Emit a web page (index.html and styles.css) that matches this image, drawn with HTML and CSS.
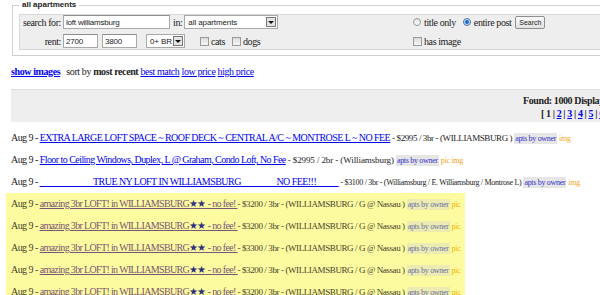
FILE: index.html
```html
<!DOCTYPE html>
<html lang="en">
<head>
    <meta charset="UTF-8">
    <title>all apartments</title>
    <link rel="stylesheet" href="styles.css">
</head>
<body>
<div class="page">
    <fieldset class="search">
        <legend>all apartments</legend>
        <div class="panel">
            <div class="frow">
                <label class="lbl">search for:</label>
                <div class="mid">
                    <input type="text" class="query" value="loft williamsburg">
                    <span class="in">in:</span>
                    <div class="select wide"><span class="val">all apartments</span><span class="arrow"></span></div>
                </div>
                <div class="side">
                    <input type="radio" name="where" class="radio">
                    <span class="opt">title only</span>
                    <input type="radio" name="where" class="radio" checked>
                    <span class="opt tight">entire post</span>
                    <button type="button">Search</button>
                </div>
            </div>
            <div class="frow">
                <label class="lbl">rent:</label>
                <div class="mid">
                    <input type="text" class="price" value="2700">
                    <input type="text" class="price gap" value="3800">
                    <div class="select br"><span class="val">0+ BR</span><span class="arrow"></span></div>
                    <input type="checkbox" class="check">
                    <span class="opt">cats</span>
                    <input type="checkbox" class="check">
                    <span class="opt">dogs</span>
                </div>
                <div class="side">
                    <input type="checkbox" class="check">
                    <span class="opt">has image</span>
                </div>
            </div>
        </div>
    </fieldset>

    <div class="sortbar">
        <a href="#" class="show">show images</a>
        <span class="sort">sort by <b>most recent</b> <a href="#">best match</a> <a href="#">low price</a> <a href="#">high price</a></span>
    </div>

    <div class="band">
        <div class="pager">
            <div class="found"><b>Found: 1000 Displaying: 1 - 100</b></div>
            <div class="pages">[ <b>1</b> | <a href="#">2</a> | <a href="#">3</a> | <a href="#">4</a> | <a href="#">5</a> | <a href="#">6</a> | <a href="#">7</a> | <a href="#">8</a> | <a href="#">9</a> | <a href="#">10</a> ]</div>
        </div>
    </div>

    <div class="listings">
        <p class="row">Aug 9 - <a href="#">EXTRA LARGE LOFT SPACE ~ ROOF DECK ~ CENTRAL A/C ~ MONTROSE L ~ NO FEE</a> <span class="meta">- $2995 / 3br - (WILLIAMSBURG )</span> <span class="cat">apts by owner</span> <span class="tag">img</span></p>
        <p class="row">Aug 9 - <a href="#">Floor to Ceiling Windows, Duplex, L @ Graham, Condo Loft, No Fee</a> <span class="meta open">- $2995 / 2br - (Williamsburg)</span> <span class="cat">apts by owner</span> <span class="tag">pic img</span></p>
        <p class="row">Aug 9 - <a href="#">____________TRUE NY LOFT IN WILLIAMSBURG________NO FEE!!!_____</a> <span class="meta small">- $3100 / 3br - (Williamsburg / E. Williamsburg / Montrose L)</span> <span class="cat">apts by owner</span> <span class="tag">img</span></p>
        <div class="hl">
            <p class="row">Aug 9 - <a href="#">amazing 3br LOFT! in WILLIAMSBURG<span class="star">★★</span> - no fee! </a> <span class="meta">- $3200 / 3br - (WILLIAMSBURG / G @ Nassau )</span> <span class="cat">apts by owner</span> <span class="tag">pic</span></p>
            <p class="row">Aug 9 - <a href="#">amazing 3br LOFT! in WILLIAMSBURG<span class="star">★★</span> - no fee! </a> <span class="meta">- $3200 / 3br - (WILLIAMSBURG / G @ Nassau )</span> <span class="cat">apts by owner</span> <span class="tag">pic</span></p>
            <p class="row">Aug 9 - <a href="#">amazing 3br LOFT! in WILLIAMSBURG<span class="star">★★</span> - no fee! </a> <span class="meta">- $3300 / 3br - (WILLIAMSBURG / G @ Nassau )</span> <span class="cat">apts by owner</span> <span class="tag">pic</span></p>
            <p class="row">Aug 9 - <a href="#">amazing 3br LOFT! in WILLIAMSBURG<span class="star">★★</span> - no fee! </a> <span class="meta">- $3200 / 3br - (WILLIAMSBURG / G @ Nassau )</span> <span class="cat">apts by owner</span> <span class="tag">pic</span></p>
            <p class="row">Aug 9 - <a href="#">amazing 3br LOFT! in WILLIAMSBURG<span class="star">★★</span> - no fee! </a> <span class="meta">- $3200 / 3br - (WILLIAMSBURG / G @ Nassau )</span> <span class="cat">apts by owner</span> <span class="tag">pic</span></p>
        </div>
    </div>
</div>
</body>
</html>
```

FILE: styles.css
```css
html {
    overflow: hidden;
}
body {
    margin: 0;
    font-family: "Liberation Serif", "Times New Roman", serif;
    font-size: 10px;
    letter-spacing: -0.4px;
    color: #222;
    background-color: #fff;
}
a {
    color: #0000ee;
}
.page {
    width: 760px;
    padding-left: 11px;
}
.search {
    margin: 0 0 0 1px;
    padding: 4px 0 5px 6px;
    border: 1px solid #d0d0d0;
    border-right: none;
}
.search legend {
    font: bold 8px "Liberation Sans", Arial, sans-serif;
    letter-spacing: 0;
    line-height: 10px;
    padding: 0 3px;
}
.panel {
    background-color: #eee;
    border: 1px solid #d8d8d8;
    border-right: none;
    padding-bottom: 1px;
}
.frow {
    display: flex;
    align-items: center;
    height: 14px;
}
.frow + .frow {
    margin-top: 5px;
}
.lbl {
    width: 41px;
    margin-right: 2px;
    text-align: right;
}
.mid {
    width: 350px;
    display: flex;
    align-items: center;
}
.side {
    display: flex;
    align-items: center;
}
input[type="text"] {
    box-sizing: border-box;
    height: 14px;
    margin: 0;
    padding: 0 2px;
    border: 1px solid #a9a9a9;
    border-top-color: #8d8d8d;
    font: 8px "Liberation Sans", Arial, sans-serif;
    letter-spacing: -0.2px;
    color: #222;
}
.query {
    width: 107px;
}
.price {
    width: 35px;
    margin-right: 4px !important;
}
.price.gap {
    margin-right: 9px !important;
}
.in {
    margin: 0 2px 0 3px;
}
.select {
    box-sizing: border-box;
    height: 14px;
    display: flex;
    align-items: center;
    background-color: #fff;
    border: 1px solid #a9a9a9;
    font: 8px "Liberation Sans", Arial, sans-serif;
    letter-spacing: -0.1px;
}
.select .val {
    flex: 1;
    padding-left: 3px;
}
.select .arrow {
    box-sizing: border-box;
    width: 10px;
    height: 10px;
    margin-right: 1px;
    border: 1px solid #777;
    background-color: #e4e4e4;
    display: flex;
    align-items: center;
    justify-content: center;
}
.select .arrow::after {
    content: "";
    border-left: 3px solid transparent;
    border-right: 3px solid transparent;
    border-top: 3px solid #111;
}
.select.wide {
    width: 94px;
}
.select.br {
    width: 39px;
    margin-right: 15px;
}
.check {
    appearance: none;
    box-sizing: border-box;
    width: 9px;
    height: 9px;
    margin: 0 2px 0 0;
    border: 1px solid #9a9a9a;
    background: linear-gradient(#ddd, #f4f4f4);
}
.opt {
    margin-right: 7px;
}
.opt.tight {
    margin-right: 4px;
}
.radio {
    appearance: none;
    box-sizing: border-box;
    width: 8px;
    height: 8px;
    margin: 0 3px 0 0;
    border: 1px solid #9a9a9a;
    border-radius: 50%;
    background: linear-gradient(#e2e2e2, #fafafa);
}
.radio:checked {
    border-color: #4a6f9a;
    background: radial-gradient(circle, #1a5fb0 0, #2a7ad8 1.6px, #cfe2f7 2.4px);
}
button {
    box-sizing: border-box;
    width: 30px;
    height: 13px;
    padding: 0;
    margin: 0;
    border: 1px solid #8f8f8f;
    border-radius: 2px;
    background: linear-gradient(#fafafa, #e2e2e2);
    font: 7px "Liberation Sans", Arial, sans-serif;
    color: #222;
}
.sortbar {
    margin-top: 10px;
    line-height: 12px;
}
.sortbar .show {
    font-weight: bold;
    margin-right: 4px;
}
.band {
    margin-top: 11px;
    height: 32px;
    padding-left: 512px;
    border-top: 1px solid #ddd;
    background-color: #eee;
}
.pager {
    padding-top: 4px;
    line-height: 13px;
    white-space: nowrap;
}
.pages {
    padding-left: 18px;
    font-weight: bold;
}
.listings {
    margin-top: 5px;
}
.row {
    margin: 0;
    line-height: 21px;
    letter-spacing: -0.55px;
    white-space: nowrap;
}
.meta {
    font-size: 9px;
    letter-spacing: -0.4px;
}
.meta.open {
    letter-spacing: -0.1px;
}
.meta.small {
    font-size: 8px;
    letter-spacing: -0.3px;
}
.cat {
    font-size: 8px;
    letter-spacing: -0.3px;
    background-color: #e6e6e6;
    color: #3333cc;
    padding: 1px 1px;
}
.tag {
    font-size: 8px;
    letter-spacing: -0.3px;
    color: #f5a623;
}
.hl {
    display: inline-block;
    margin-left: -5px;
    padding: 0 5px;
    background-color: #fdfb9f;
    color: #45452f;
}
.hl a {
    color: #7a5577;
    letter-spacing: -0.65px;
}
.hl .star {
    color: #2e2e80;
}
.hl .cat {
    background-color: #ececb2;
    color: #6e6ea8;
}
.hl .tag {
    color: #f2b300;
}
```
